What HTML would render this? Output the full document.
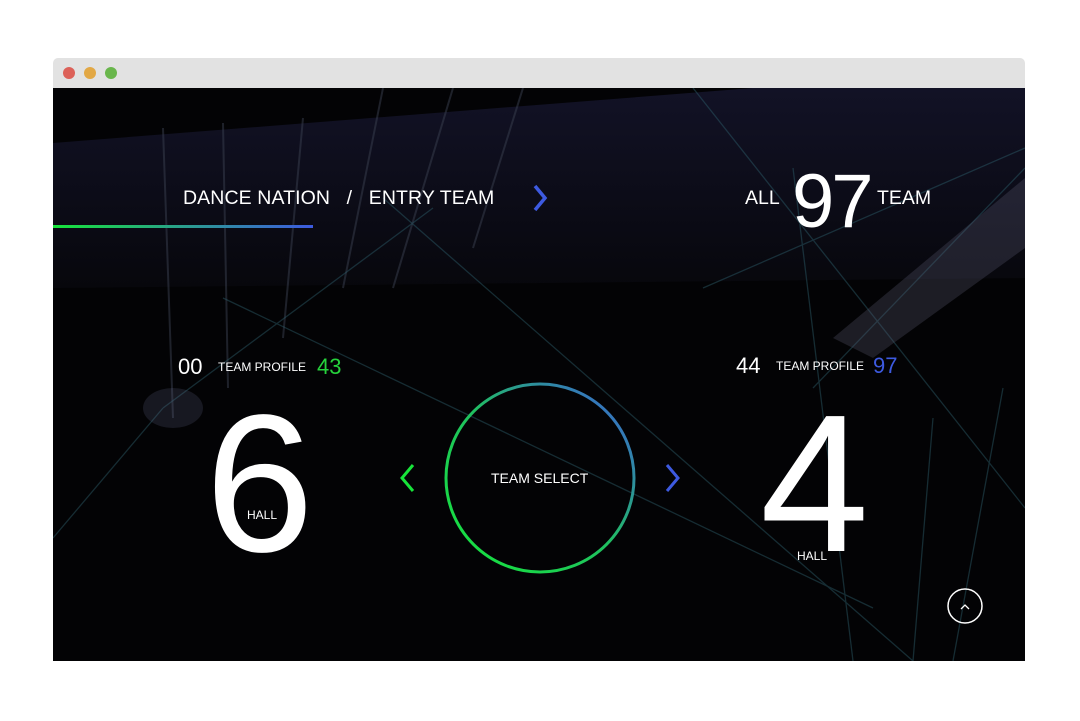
<!DOCTYPE html>
<html><head><meta charset="utf-8"><style>
*{margin:0;padding:0;box-sizing:border-box}
body{width:1080px;height:721px;background:#fff;position:relative;overflow:hidden;font-family:"Liberation Sans",sans-serif;color:#fff}
.bar{position:absolute;left:53px;top:58px;width:972px;height:30px;background:#e2e2e2;border-radius:5px 5px 0 0}
.dot{position:absolute;top:9px;width:12px;height:12px;border-radius:50%}
.stage{position:absolute;left:53px;top:88px;width:972px;height:573px;background:#030305;overflow:hidden}
.t{position:absolute;white-space:nowrap;line-height:1}
</style></head><body>
<div class="bar"><div class="dot" style="left:10px;background:#dc6159"></div><div class="dot" style="left:31px;background:#e2a845"></div><div class="dot" style="left:52px;background:#69b64c"></div></div>
<div class="stage">
<svg width="972" height="573" style="position:absolute;left:0;top:0">
<defs>
<linearGradient id="lg" x1="0" x2="1"><stop offset="0" stop-color="#17e43a"/><stop offset="1" stop-color="#3d5ae0"/></linearGradient>
<linearGradient id="cg" x1="0" y1="1" x2="1" y2="0"><stop offset="0" stop-color="#15e63a"/><stop offset="0.5" stop-color="#20c060"/><stop offset="1" stop-color="#3d5ae0"/></linearGradient>
<linearGradient id="bg" x1="0" y1="0" x2="0" y2="1"><stop offset="0" stop-color="#121226"/><stop offset="1" stop-color="#07070c"/></linearGradient>
</defs>
<polygon points="0,55 700,0 972,0 972,190 0,200" fill="url(#bg)"/>
<g stroke="#3a4050" stroke-width="2" opacity="0.5">
<line x1="110" y1="40" x2="120" y2="330"/><line x1="170" y1="35" x2="175" y2="300"/>
<line x1="250" y1="30" x2="230" y2="250"/><line x1="330" y1="0" x2="290" y2="200"/>
<line x1="400" y1="0" x2="340" y2="200"/><line x1="470" y1="0" x2="420" y2="160"/>
</g>
<g stroke="#2d5f6c" stroke-width="1.3" opacity="0.45">
<line x1="330" y1="110" x2="860" y2="573"/><line x1="170" y1="210" x2="820" y2="520"/>
<line x1="640" y1="0" x2="972" y2="420"/><line x1="740" y1="80" x2="800" y2="573"/>
<line x1="972" y1="80" x2="760" y2="300"/><line x1="650" y1="200" x2="972" y2="60"/>
<line x1="110" y1="320" x2="380" y2="120"/><line x1="110" y1="320" x2="0" y2="450"/>
<line x1="880" y1="330" x2="860" y2="573"/><line x1="950" y1="300" x2="900" y2="573"/>
</g>
<polygon points="780,250 972,90 972,160 820,270" fill="#5a5a70" opacity="0.3"/>
<ellipse cx="120" cy="320" rx="30" ry="20" fill="#6a7090" opacity="0.2"/>
<rect x="0" y="137" width="260" height="3" fill="url(#lg)"/>
<circle cx="487" cy="390" r="94" fill="none" stroke="url(#cg)" stroke-width="3"/>
<polyline points="360,377 349,390 360,403" fill="none" stroke="#17e43a" stroke-width="3"/>
<polyline points="614,377 625,390 614,403" fill="none" stroke="#3d5ae0" stroke-width="3"/>
<polyline points="482,98 492,110 482,122" fill="none" stroke="#3d5ae0" stroke-width="3.5"/>
<circle cx="912" cy="518" r="17" fill="none" stroke="#fff" stroke-width="1.5"/>
<polyline points="908,521 912,517 916,521" fill="none" stroke="#fff" stroke-width="1.3"/>
</svg>
<div class="t" style="left:130px;top:101px;font-size:19.5px;letter-spacing:0.1px">DANCE NATION &nbsp;&nbsp;/ &nbsp;&nbsp;ENTRY TEAM</div>
<div class="t" style="left:692px;top:101px;font-size:19.5px">ALL</div>
<div class="t" style="left:739px;top:76px;font-size:76px;letter-spacing:-3px">97</div>
<div class="t" style="left:824px;top:101px;font-size:19.5px">TEAM</div>
<div class="t" style="left:125px;top:268px;font-size:22px">00</div>
<div class="t" style="left:165px;top:273px;font-size:12px">TEAM PROFILE</div>
<div class="t" style="left:264px;top:268px;font-size:22px;color:#26d23c">43</div>
<div class="t" style="left:683px;top:267px;font-size:22px">44</div>
<div class="t" style="left:723px;top:272px;font-size:12px">TEAM PROFILE</div>
<div class="t" style="left:820px;top:267px;font-size:22px;color:#3d5ae0">97</div>
<div class="t" style="left:152px;top:298px;font-size:196px">6</div>
<div class="t" style="left:194px;top:421px;font-size:12px">HALL</div>
<div class="t" style="left:707px;top:298px;font-size:196px">4</div>
<div class="t" style="left:744px;top:462px;font-size:12px">HALL</div>
<div class="t" style="left:438px;top:383px;font-size:14px">TEAM SELECT</div>
</div>
</body></html>
